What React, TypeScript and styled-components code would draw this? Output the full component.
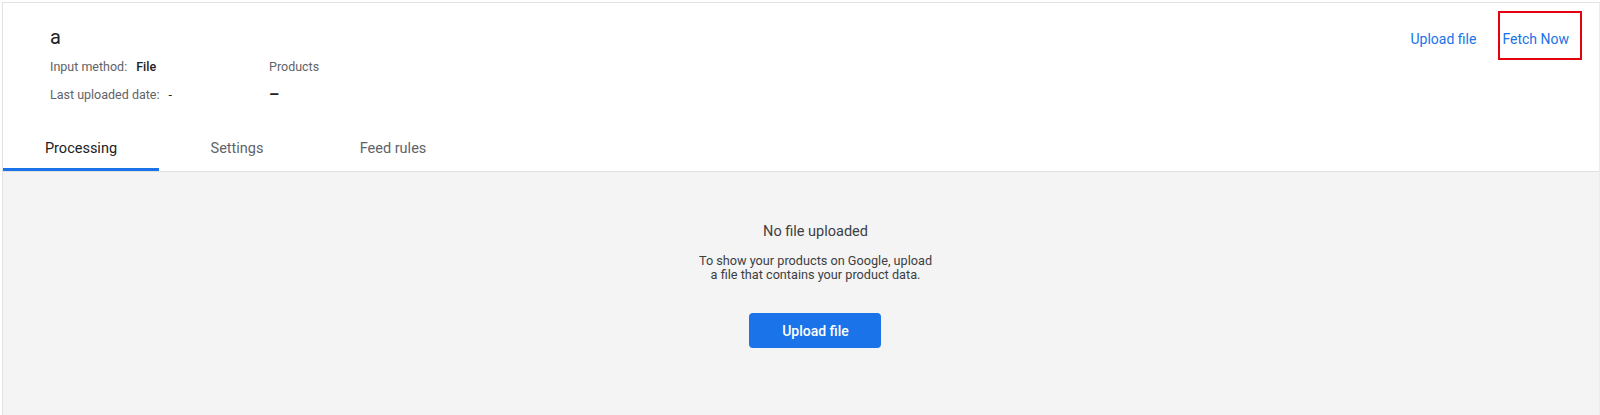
import styled, { createGlobalStyle } from 'styled-components';

const GlobalStyle = createGlobalStyle`
  html, body {
    margin: 0;
    padding: 0;
    background: #ffffff;
    font-family: Roboto, 'Liberation Sans', Arial, sans-serif;
  }
`;

const Page = styled.div`
  padding: 2px 0 0 2px;
  height: 413px;
  box-sizing: content-box;
`;

const Card = styled.div`
  display: flex;
  flex-direction: column;
  height: 413px;
  border-top: 1px solid #e3e3e3;
  border-left: 1px solid #e3e3e3;
  border-right: 1px solid #ececec;
  box-sizing: border-box;
`;

const Header = styled.header`
  display: flex;
  justify-content: space-between;
  align-items: flex-start;
  padding: 22px 17px 0 47px;
`;

const Summary = styled.div`
  display: flex;
  flex-direction: column;
  gap: 3px;
`;

const Title = styled.h1`
  margin: 0;
  font-size: 20px;
  line-height: 24px;
  font-weight: 400;
  color: #202124;
`;

const MetaGrid = styled.div`
  display: grid;
  grid-template-columns: 219px auto;
  grid-auto-rows: 28px;
  align-items: center;
`;

const MetaItem = styled.div`
  display: flex;
  align-items: center;
  gap: 9px;
  font-size: 12.5px;
  color: #5f6368;
`;

const MetaValue = styled.span<{ $strong?: boolean }>`
  color: #202124;
  font-weight: ${p => (p.$strong ? 500 : 400)};
`;

const Dash = styled.span`
  font-size: 16px;
  font-weight: 700;
  color: #202124;
`;

const Actions = styled.div`
  display: flex;
  align-items: flex-start;
  gap: 20px;
  margin-top: -14px;
`;

const ActionLink = styled.a<{ $highlighted?: boolean }>`
  display: inline-flex;
  align-items: center;
  height: 49px;
  box-sizing: border-box;
  padding: ${p => (p.$highlighted ? '6px 11px 0 2px' : '6px 0 0 0')};
  border: 2px solid ${p => (p.$highlighted ? '#e3000f' : 'transparent')};
  font-size: 14px;
  color: #1a73e8;
  text-decoration: none;
  cursor: pointer;
`;

const Tabs = styled.nav`
  display: flex;
  margin-top: 15px;
  border-bottom: 1px solid #e0e0e0;
`;

const Tab = styled.button<{ $active?: boolean }>`
  width: 156px;
  height: 48px;
  padding: 5px 0 0;
  border: none;
  border-bottom: 3px solid ${p => (p.$active ? '#1a73e8' : 'transparent')};
  background: none;
  font-family: inherit;
  font-size: 14.5px;
  font-weight: 400;
  color: ${p => (p.$active ? '#202124' : '#5f6368')};
  cursor: pointer;
`;

const Body = styled.main`
  flex: 1;
  display: flex;
  justify-content: center;
  padding: 50px 0 0 29px;
  background: #f4f4f4;
`;

const EmptyState = styled.div`
  display: flex;
  flex-direction: column;
  align-items: center;
  text-align: center;
`;

const EmptyTitle = styled.h2`
  margin: 0;
  font-size: 14.5px;
  line-height: 20px;
  font-weight: 400;
  color: #3c4043;
`;

const EmptyText = styled.p`
  margin: 12px 0 0;
  font-size: 12.7px;
  line-height: 14px;
  color: #3c4043;
`;

const PrimaryButton = styled.button`
  margin-top: 31px;
  width: 132px;
  height: 35px;
  border: none;
  border-radius: 4px;
  background: #1a73e8;
  color: #ffffff;
  font-family: inherit;
  font-size: 14px;
  font-weight: 500;
  cursor: pointer;
`;

export default function App() {
  return (
    <>
      <GlobalStyle />
      <Page>
        <Card>
          <Header>
            <Summary>
              <Title>a</Title>
              <MetaGrid>
                <MetaItem>
                  Input method: <MetaValue $strong>File</MetaValue>
                </MetaItem>
                <MetaItem>Products</MetaItem>
                <MetaItem>
                  Last uploaded date: <MetaValue>-</MetaValue>
                </MetaItem>
                <MetaItem>
                  <Dash>–</Dash>
                </MetaItem>
              </MetaGrid>
            </Summary>
            <Actions>
              <ActionLink>Upload file</ActionLink>
              <ActionLink $highlighted>Fetch Now</ActionLink>
            </Actions>
          </Header>
          <Tabs>
            <Tab $active>Processing</Tab>
            <Tab>Settings</Tab>
            <Tab>Feed rules</Tab>
          </Tabs>
          <Body>
            <EmptyState>
              <EmptyTitle>No file uploaded</EmptyTitle>
              <EmptyText>
                To show your products on Google, upload
                <br />
                a file that contains your product data.
              </EmptyText>
              <PrimaryButton>Upload file</PrimaryButton>
            </EmptyState>
          </Body>
        </Card>
      </Page>
    </>
  );
}
